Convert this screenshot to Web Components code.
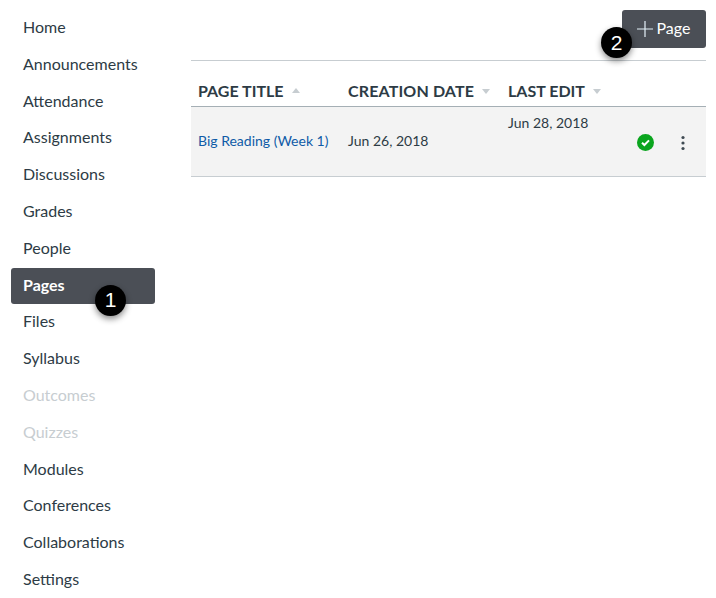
<!DOCTYPE html>
<html>
<head>
<meta charset="utf-8">
<style>
    html, body { margin: 0; background: #fff; }
    body { font-family: Lato, "Open Sans", sans-serif; color: #2d3b45; height: 598px; overflow: hidden; }
    app-shell { height: 598px; }
</style>
</head>
<body>
<app-shell>
    <course-nav slot="nav">
        <nav-item>Home</nav-item>
        <nav-item>Announcements</nav-item>
        <nav-item>Attendance</nav-item>
        <nav-item>Assignments</nav-item>
        <nav-item>Discussions</nav-item>
        <nav-item>Grades</nav-item>
        <nav-item>People</nav-item>
        <nav-item active>Pages<step-badge n="1" style="left:84px;top:19px"></step-badge></nav-item>
        <nav-item>Files</nav-item>
        <nav-item>Syllabus</nav-item>
        <nav-item disabled>Outcomes</nav-item>
        <nav-item disabled>Quizzes</nav-item>
        <nav-item>Modules</nav-item>
        <nav-item>Conferences</nav-item>
        <nav-item>Collaborations</nav-item>
        <nav-item>Settings</nav-item>
    </course-nav>
    <pages-view></pages-view>
</app-shell>

<script>
class AppShell extends HTMLElement {
    constructor() {
        super();
        this.attachShadow({mode : "open"});
        this.shadowRoot.innerHTML = `
            <style>
                :host { display: flex; }
                .main { flex: 1; min-width: 0; }
            </style>
            <slot name="nav"></slot>
            <div class="main"><slot></slot></div>
        `;
    }
}

class CourseNav extends HTMLElement {
    constructor() {
        super();
        this.attachShadow({mode : "open"});
        this.shadowRoot.innerHTML = `
            <style>
                :host {
                    display: flex;
                    flex-direction: column;
                    width: 144px;
                    padding: 8.2px 36px 0 11px;
                    flex: none;
                }
            </style>
            <slot></slot>
        `;
    }
}

class NavItem extends HTMLElement {
    constructor() {
        super();
        this.attachShadow({mode : "open"});
        this.shadowRoot.innerHTML = `
            <style>
                :host {
                    display: flex;
                    align-items: center;
                    position: relative;
                    isolation: isolate;
                    box-sizing: border-box;
                    height: 36.8px;
                    padding-left: 12px;
                    font-size: 16px;
                    color: #2d3b45;
                    white-space: nowrap;
                }
                :host([active]) {
                    color: #fff;
                    font-weight: 700;
                }
                /* the highlight sits a little lower than the text row */
                :host([active])::before {
                    content: "";
                    position: absolute;
                    left: 0;
                    right: 0;
                    top: 2.2px;
                    height: 36px;
                    background: #4b4f56;
                    border-radius: 3px;
                    z-index: -1;
                }
                :host([disabled]) { color: #c7cdd1; }
            </style>
            <slot></slot>
        `;
    }
}

class StepBadge extends HTMLElement {
    constructor() {
        super();
        this.attachShadow({mode : "open"});
        this.shadowRoot.innerHTML = `
            <style>
                :host {
                    position: absolute;
                    display: flex;
                    align-items: center;
                    justify-content: center;
                    width: 31px;
                    height: 31px;
                    border-radius: 50%;
                    background: #000;
                    color: #fff;
                    font: 400 21px "Liberation Sans", Arial, sans-serif;
                    box-shadow: 0 3px 6px rgba(0, 0, 0, 0.45);
                    z-index: 2;
                }
            </style>
            <span></span>
        `;
    }

    connectedCallback() {
        this.shadowRoot.querySelector("span").textContent = this.getAttribute("n");
    }
}

class SortHead extends HTMLElement {
    constructor() {
        super();
        this.attachShadow({mode : "open"});
        this.shadowRoot.innerHTML = `
            <style>
                :host {
                    display: flex;
                    align-items: center;
                    gap: 8px;
                    font-size: 16px;
                    font-weight: 700;
                    color: #2d3b45;
                    white-space: nowrap;
                }
                i {
                    width: 0;
                    height: 0;
                    border-left: 4px solid transparent;
                    border-right: 4px solid transparent;
                }
                :host([dir-up]) i { border-bottom: 5px solid #c7cdd1; }
                :host(:not([dir-up])) i { border-top: 5px solid #c7cdd1; margin-top: 1px; }
            </style>
            <slot></slot><i></i>
        `;
    }
}

class PagesView extends HTMLElement {
    constructor() {
        super();
        this.attachShadow({mode : "open"});
        this.shadowRoot.innerHTML = `
            <style>
                :host {
                    display: block;
                    box-sizing: border-box;
                    width: 515px;
                    position: relative;
                }
                .toolbar {
                    display: flex;
                    justify-content: flex-end;
                    box-sizing: border-box;
                    height: 61px;
                    padding-top: 10px;
                    border-bottom: 1px solid #c7cdd1;
                }
                .add {
                    display: flex;
                    align-items: center;
                    justify-content: center;
                    gap: 3px;
                    width: 84px;
                    height: 38px;
                    background: #4b4f56;
                    border-radius: 3px;
                    color: #fff;
                    font-size: 16px;
                }
                .add span { padding: 0 2px 4px 0; }
                .grid {
                    display: grid;
                    grid-template-columns: 150px 160px 136px 44px 25px;
                }
                .head {
                    grid-column: 1 / -1;
                    display: grid;
                    grid-template-columns: subgrid;
                    align-items: center;
                    height: 46px;
                    padding-top: 14px;
                    box-sizing: border-box;
                    border-bottom: 1px solid #a5afb5;
                }
                .row {
                    grid-column: 1 / -1;
                    display: grid;
                    grid-template-columns: subgrid;
                    height: 70px;
                    box-sizing: border-box;
                    background: #f3f3f3;
                    border-bottom: 1px solid #c7cdd1;
                    font-size: 14px;
                    color: #2d3b45;
                    align-items: center;
                }
                .pad { margin-left: 7px; }
                a { color: #0f5ba7; text-decoration: none; white-space: nowrap; position: relative; top: -1px; }
                .date { white-space: nowrap; position: relative; top: -1px; }
                .top { align-self: start; padding-top: 7px; white-space: nowrap; }
                .ico { display: flex; }
                .ico svg { display: block; }
                .check { margin-top: 2px; }
                .more { margin-top: 2px; }
            </style>
            <div class="toolbar">
                <div class="add">
                    <svg width="18" height="18" viewBox="0 0 18 18" aria-hidden="true">
                        <path d="M9 1v16M1 9h16" stroke="#e4f1f8" stroke-width="1.2" fill="none"/>
                    </svg>
                    <span>Page</span>
                </div>
            </div>
            <step-badge n="2" style="left:410px;top:27px"></step-badge>
            <div class="grid">
                <div class="head">
                    <sort-head class="pad" dir-up>PAGE TITLE</sort-head>
                    <sort-head class="pad" style="letter-spacing:.15px">CREATION DATE</sort-head>
                    <sort-head class="pad">LAST EDIT</sort-head>
                </div>
                <div class="row">
                    <a class="pad">Big Reading (Week 1)</a>
                    <span class="date pad">Jun 26, 2018</span>
                    <span class="top pad">Jun 28, 2018</span>
                    <span class="ico check">
                        <svg width="17" height="17" viewBox="0 0 17 17" aria-hidden="true">
                            <circle cx="8.5" cy="8.5" r="8.5" fill="#0aa51e"/>
                            <path d="M5 8.7l2.4 2.3L12 6.4" stroke="#fff" stroke-width="2" fill="none"/>
                        </svg>
                    </span>
                    <span class="ico more">
                        <svg width="4" height="16" viewBox="0 0 4 16" aria-hidden="true">
                            <circle cx="2" cy="2.5" r="1.6" fill="#3f4a52"/>
                            <circle cx="2" cy="8" r="1.6" fill="#3f4a52"/>
                            <circle cx="2" cy="13.5" r="1.6" fill="#3f4a52"/>
                        </svg>
                    </span>
                </div>
            </div>
        `;
    }
}

customElements.define("app-shell", AppShell);
customElements.define("course-nav", CourseNav);
customElements.define("nav-item", NavItem);
customElements.define("step-badge", StepBadge);
customElements.define("sort-head", SortHead);
customElements.define("pages-view", PagesView);
</script>
</body>
</html>
